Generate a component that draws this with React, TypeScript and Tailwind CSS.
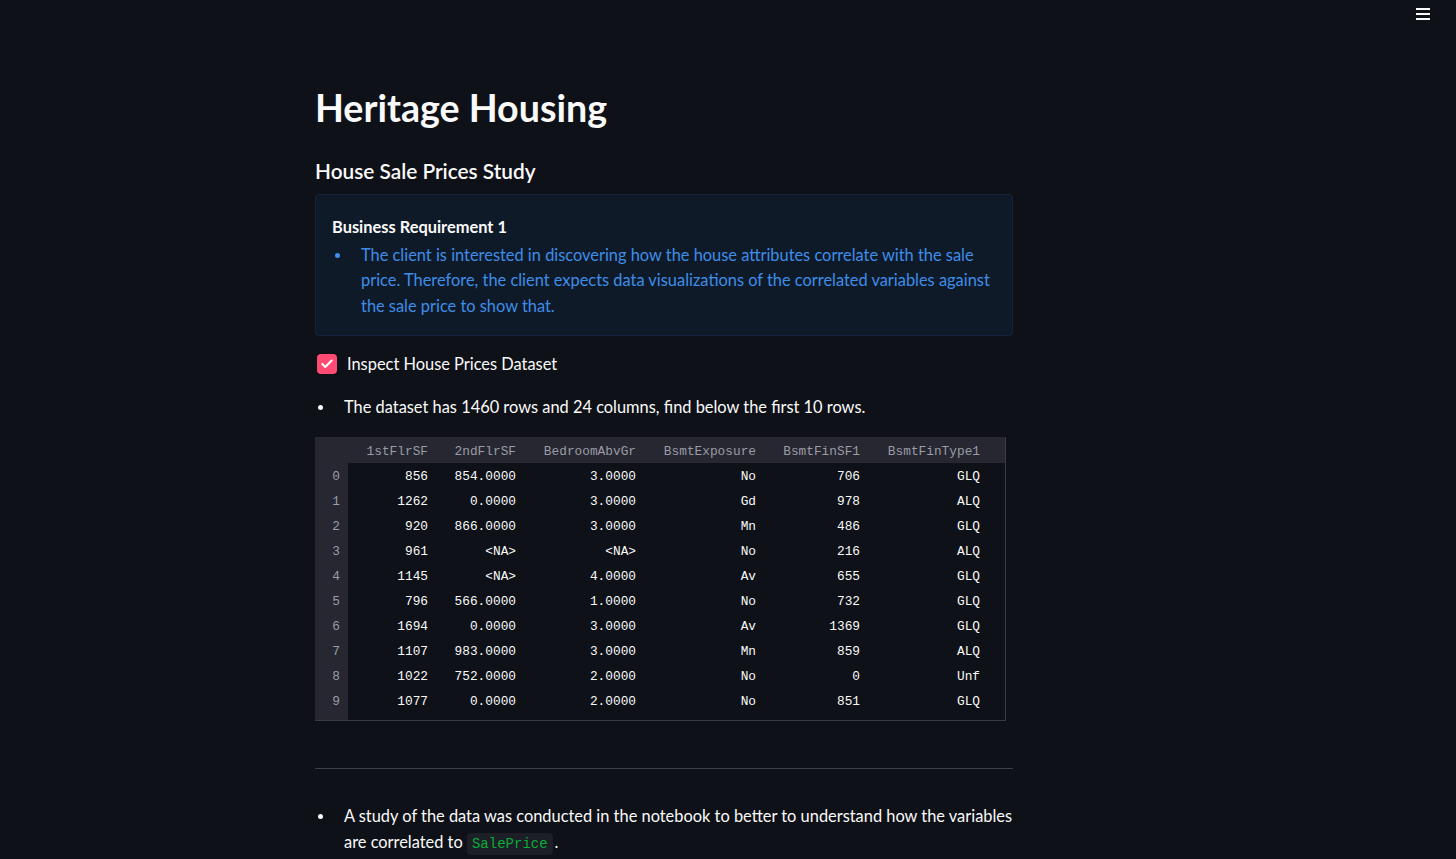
import { Check } from "lucide-react";

const cols = [
  { name: "1stFlrSF", w: "w-[92px]" },
  { name: "2ndFlrSF", w: "w-[88px]" },
  { name: "BedroomAbvGr", w: "w-[120px]" },
  { name: "BsmtExposure", w: "w-[120px]" },
  { name: "BsmtFinSF1", w: "w-[104px]" },
  { name: "BsmtFinType1", w: "w-[120px]" },
];

const rows = [
  ["856", "854.0000", "3.0000", "No", "706", "GLQ"],
  ["1262", "0.0000", "3.0000", "Gd", "978", "ALQ"],
  ["920", "866.0000", "3.0000", "Mn", "486", "GLQ"],
  ["961", "<NA>", "<NA>", "No", "216", "ALQ"],
  ["1145", "<NA>", "4.0000", "Av", "655", "GLQ"],
  ["796", "566.0000", "1.0000", "No", "732", "GLQ"],
  ["1694", "0.0000", "3.0000", "Av", "1369", "GLQ"],
  ["1107", "983.0000", "3.0000", "Mn", "859", "ALQ"],
  ["1022", "752.0000", "2.0000", "No", "0", "Unf"],
  ["1077", "0.0000", "2.0000", "No", "851", "GLQ"],
];

function Bullet({ children, color = "bg-[#fafafa]" }: { children: React.ReactNode; color?: string }) {
  return (
    <div className="flex">
      <div className="w-[29px] shrink-0 flex pt-[11px] pl-[3px]">
        <span className={`w-[5px] h-[5px] rounded-full ${color}`} />
      </div>
      <div className="flex-1">{children}</div>
    </div>
  );
}

function DataTable() {
  return (
    <div className="w-[691px] border-r border-b border-[#3a3b44] bg-[#0e1117] pb-[7px] font-['Liberation_Mono',monospace] text-[12.8px]">
      <div className="flex h-[26px] items-center pt-[4px] bg-[#262730] text-[#9a9ca6]">
        <div className="w-[33px]" />
        {cols.map((c) => (
          <div key={c.name} className={`${c.w} pr-[12px] text-right`}>
            {c.name}
          </div>
        ))}
      </div>
      <div className="flex">
        <div className="w-[33px] bg-[#262730] text-[#9a9ca6] -mb-[7px] pb-[7px]">
          {rows.map((_, i) => (
            <div key={i} className="h-[25px] flex items-center pt-[2px] justify-end pr-[8px]">
              {i}
            </div>
          ))}
        </div>
        <div>
          {rows.map((r, i) => (
            <div key={i} className="flex h-[25px] items-center pt-[2px] text-[#fafafa]">
              {r.map((v, j) => (
                <div key={j} className={`${cols[j].w} pr-[12px] text-right`}>
                  {v}
                </div>
              ))}
            </div>
          ))}
        </div>
      </div>
    </div>
  );
}

export default function App() {
  return (
    <div className="min-h-screen bg-[#0e1117] text-[#fafafa] font-['Lato',sans-serif]">
      <div className="h-[46px] flex justify-end items-start pt-[7px] pr-[26px]">
        <div className="flex flex-col gap-[3px] pt-[1px]">
          <span className="block w-[14px] h-[2px] bg-[#fafafa]" />
          <span className="block w-[14px] h-[2px] bg-[#fafafa]" />
          <span className="block w-[14px] h-[2px] bg-[#fafafa]" />
        </div>
      </div>
      <div className="w-[698px] ml-[315px]">
        <h1 className="text-[37.6px] font-bold leading-[1.2] mt-[39px]">Heritage Housing</h1>
        <h3 className="text-[20.8px] font-semibold leading-[1.2] mt-[29px]">House Sale Prices Study</h3>
        <div className="mt-[10px] rounded-[4px] border border-[#16233a] bg-[#0f1a29] pl-[16px] pr-[16px] pt-[19px] pb-[17px] text-[16.4px] leading-[25.6px]">
          <div className="font-bold text-[#fafafa] mb-[2px]">Business Requirement 1</div>
          <Bullet color="bg-[#3e8ee8]">
            <span className="text-[#3e8ee8]">
              The client is interested in discovering how the house attributes correlate with the sale price.
              Therefore, the client expects data visualizations of the correlated variables against the sale
              price to show that.
            </span>
          </Bullet>
        </div>
        <label className="mt-[16px] flex items-center h-[24px]">
          <span className="ml-[2px] w-[20px] h-[20px] rounded-[4px] bg-[#ff4b73] flex items-center justify-center">
            <Check className="w-[14px] h-[14px] text-white" strokeWidth={3.5} />
          </span>
          <span className="ml-[10px] text-[16.4px]">Inspect House Prices Dataset</span>
        </label>
        <div className="mt-[18px] text-[16.4px] leading-[25.6px]">
          <Bullet>The dataset has 1460 rows and 24 columns, find below the first 10 rows.</Bullet>
        </div>
        <div className="mt-[17px]">
          <DataTable />
        </div>
        <hr className="mt-[47px] border-0 h-px bg-[#3d3f46]" />
        <div className="mt-[34px] text-[16.4px] leading-[25.6px]">
          <Bullet>
            <span>A study of the data was conducted in the notebook to better to understand how the variables</span>{" "}
            <span>are correlated to</span>{" "}
            <code className="inline-block mr-[2px] leading-[22px] bg-[#1c1f26] text-[#09ab3b] rounded-[4px] px-[5px] font-['Liberation_Mono',monospace] text-[14px]">
              SalePrice
            </code>
            <span>.</span>
          </Bullet>
        </div>
      </div>
    </div>
  );
}
